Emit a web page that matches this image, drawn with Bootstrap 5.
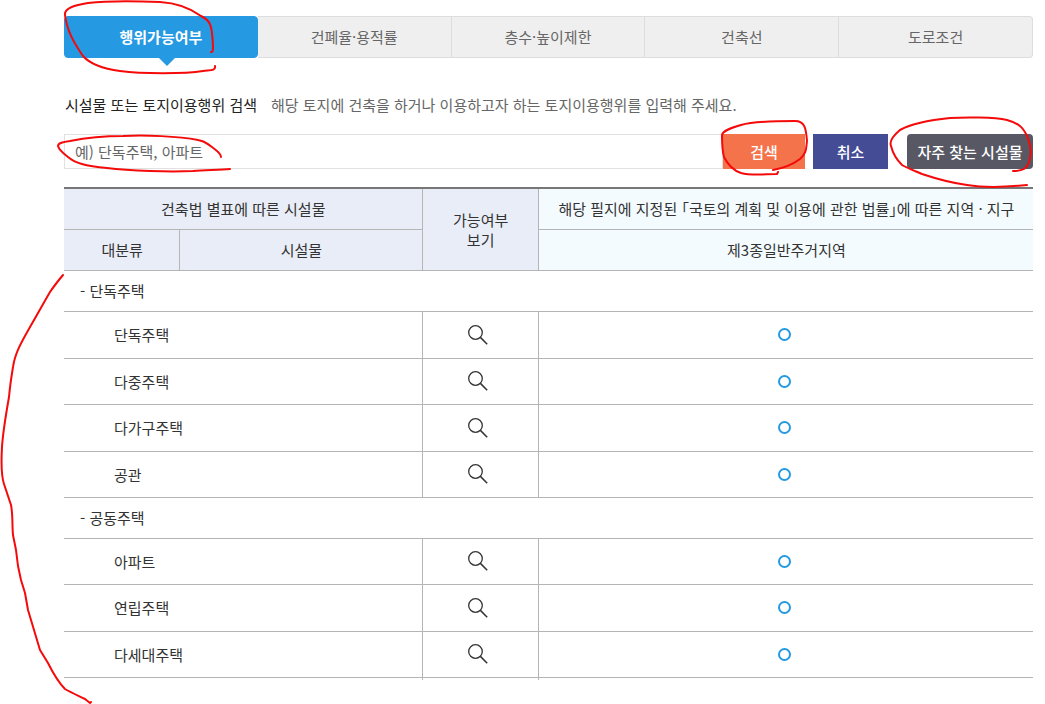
<!DOCTYPE html>
<html lang="ko">
<head>
<meta charset="utf-8">
<meta name="viewport" content="width=device-width, initial-scale=1">
<title>행위가능여부</title>
<link href="https://cdn.jsdelivr.net/npm/bootstrap@5.3.0/dist/css/bootstrap.min.css" rel="stylesheet">
<style>
  body { font-family: "Noto Sans CJK KR", sans-serif; font-size: 15px; line-height: 20px; color: #333; background: #fff; }
  .page-body { padding: 16px 12px 24px 64px; }

  .tab-bar .nav-link { height: 42px; line-height: 40px; padding: 0; color: #666; background: #efefef; border: 1px solid #ddd; border-left-width: 0; border-radius: 0; }
  .tab-bar .nav-item:last-child .nav-link { border-radius: 0 4px 4px 0; }
  .tab-bar .nav-link.active { color: #fff; background: #2599e1; border-color: #2599e1; border-left-width: 1px; border-radius: 4px; font-weight: 700; }
  .tab-arrow { top: 100%; left: 50%; margin-left: -2px; border: 8px solid transparent; border-top-color: #2599e1; border-bottom: 0; }

  .search-area { padding-top: 37px; padding-bottom: 18px; }
  .search-intro { gap: 14px; margin-bottom: 19px; padding-left: 1px; }
  .search-title { color: #222; }
  .search-help { color: #666; }
  .search-box { height: 35px; padding: 0 10px; font-size: 15px; color: #333; border: 1px solid #e1e1e1; border-radius: 0; }
  .search-box::placeholder { color: #666; opacity: 1; }
  .search-row .btn { height: 35px; padding: 0; font-size: 15px; line-height: 20px; font-weight: 500; color: #fff; border: 0; border-radius: 0; }
  .search-row .btn-find { width: 82px; background: #f4734b; }
  .search-row .btn-cancel { width: 75px; margin-right: 19px; background: #434c94; }
  .search-row .btn-often { width: 126px; background: #585864; border-radius: 4px; }

  .use-table { table-layout: fixed; border-collapse: separate; border-spacing: 0; border-top: 2px solid #777; }
  .use-table th, .use-table td { height: 46px; padding: 0; border-bottom: 1px solid #b5b5b5; font-weight: 400; vertical-align: middle; }
  .use-table tbody tr:nth-child(even) > td { height: 47px; }
  .use-table thead th { height: 41px; padding-left: 1px; text-align: center; background: #e9edf7; }
  .use-table thead th.zone-head { background: #f3fbff; font-feature-settings: "halt"; }
  .use-table tbody .group-name { height: 41px; padding-left: 16px; }
  .use-table .item-name { padding-left: 50px; }
  .use-table .line-end { border-right: 1px solid #b5b5b5; }
  .use-table tbody tr.next-row > td { height: 2px; border-bottom: 0; }
  .use-table .view-cell { padding-right: 4px; padding-bottom: 1px; }
  .use-table .mark-cell { padding-right: 3px; padding-bottom: 1px; }
  .view-btn { width: 20px; height: 20px; color: #333; }
  .allow-mark { width: 13px; height: 13px; border: 2px solid #2599e1; border-radius: 50%; }

  .pen-mark { overflow: visible; pointer-events: none; z-index: 5; fill: none; stroke: #f50a0a; stroke-width: 2; stroke-linecap: round; stroke-linejoin: round; }
  .pen-tab { left: 0; top: -16px; }
  .pen-input { left: -7px; top: 0; }
  .pen-find { left: -2px; top: -14px; }
  .pen-often { right: 0; top: -18px; }
  .pen-table { left: -64px; top: 86px; }
</style>
</head>
<body>
<svg width="0" height="0" class="position-absolute" aria-hidden="true">
  <symbol id="lens" viewBox="0 0 20 20">
    <circle cx="7.5" cy="7.5" r="6.8" fill="none" stroke="currentColor" stroke-width="1.3"/>
    <path d="M12.4 12.4 19.2 19.2" fill="none" stroke="currentColor" stroke-width="1.5"/>
  </symbol>
</svg>

<main class="page-body">
  <ul class="nav nav-fill tab-bar flex-nowrap text-center">
    <li class="nav-item w-100 position-relative">
      <a class="nav-link active" href="#" aria-current="page">행위가능여부</a>
      <span class="tab-arrow position-absolute"></span>
      <svg class="pen-mark pen-tab position-absolute" width="153" height="75" viewBox="64 0 153 75" aria-hidden="true"><path d="M211 52C214 53 213 44 212 33C211 24 209 20 201 16C190 8 178 3 160 2C136 1 105 1 88 3C75 5 64 8 65 15C67 31 74 43 83 56C91 65 105 69 120 71C142 74 185 74 203 71C210 70 216 71 215 66"/></svg>
    </li>
    <li class="nav-item w-100"><a class="nav-link" href="#">건폐율·용적률</a></li>
    <li class="nav-item w-100"><a class="nav-link" href="#">층수·높이제한</a></li>
    <li class="nav-item w-100"><a class="nav-link" href="#">건축선</a></li>
    <li class="nav-item w-100"><a class="nav-link" href="#">도로조건</a></li>
  </ul>

  <section class="search-area">
    <div class="search-intro d-flex">
      <label class="search-title" for="facility">시설물 또는 토지이용행위 검색</label>
      <span class="search-help">해당 토지에 건축을 하거나 이용하고자 하는 토지이용행위를 입력해 주세요.</span>
    </div>
    <form class="search-row d-flex">
      <div class="flex-grow-1 position-relative">
        <input class="form-control search-box" type="text" id="facility" placeholder="예) 단독주택, 아파트">
        <svg class="pen-mark pen-input position-absolute" width="175" height="38" viewBox="57 134 175 38" aria-hidden="true"><path d="M221 157C221 153 217 151 212 147C207 144 206 141 198 140C178 136 145 135 123 136C100 136 85 138 70 141C63 142 58 143 58 146C59 150 64 154 68 157C75 163 85 166 107 168C130 171 170 172 193 171C207 170 220 170 230 169"/></svg>
      </div>
      <div class="position-relative me-2">
        <button class="btn btn-find" type="button">검색</button>
        <svg class="pen-mark pen-find position-absolute" width="86" height="57" viewBox="721 120 86 57" aria-hidden="true"><path d="M773 170C784 168 792 165 800 159C807 153 806 148 807 141C806 131 806 121 795 121C779 121 752 122 741 125C732 128 723 130 722 135C722 142 722 150 724 157C727 163 732 170 741 173C752 176 765 174 777 174L778 172"/></svg>
      </div>
      <button class="btn btn-cancel" type="button">취소</button>
      <div class="position-relative">
        <button class="btn btn-often" type="button">자주 찾는 시설물</button>
        <svg class="pen-mark pen-often position-absolute" width="143" height="72" viewBox="890 116 143 72" aria-hidden="true"><path d="M1013 171C1024 171 1027 168 1029 162C1032 153 1031 145 1027 136C1023 127 1018 123 1007 120C994 117 965 117 950 118C930 120 911 124 900 130C894 135 889 141 891 146C893 154 898 161 902 165C907 168 915 171 922 174C937 179 952 183 967 185C985 188 1008 187 1027 185"/></svg>
      </div>
    </form>
  </section>

  <div class="position-relative">
    <table class="use-table w-100">
      <colgroup><col style="width:12%"><col style="width:25%"><col style="width:12%"><col style="width:51%"></colgroup>
      <thead>
        <tr>
          <th class="line-end" colspan="2" scope="colgroup">건축법 별표에 따른 시설물</th>
          <th class="line-end" rowspan="2" scope="col">가능여부<br>보기</th>
          <th class="zone-head" scope="col">해당 필지에 지정된 「국토의 계획 및 이용에 관한 법률」에 따른 지역 · 지구</th>
        </tr>
        <tr>
          <th class="line-end" scope="col">대분류</th>
          <th class="line-end" scope="col">시설물</th>
          <th class="zone-head" scope="col">제3종일반주거지역</th>
        </tr>
      </thead>
      <tbody>
        <tr><th class="group-name" colspan="4" scope="rowgroup">- 단독주택</th></tr>
        <tr><td class="item-name line-end" colspan="2">단독주택</td><td class="view-cell line-end"><button type="button" class="btn view-btn p-0 border-0 d-flex mx-auto" aria-label="보기"><svg width="20" height="20"><use href="#lens"/></svg></button></td><td class="mark-cell"><span class="allow-mark d-block mx-auto" role="img" aria-label="가능"></span></td></tr>
        <tr><td class="item-name line-end" colspan="2">다중주택</td><td class="view-cell line-end"><button type="button" class="btn view-btn p-0 border-0 d-flex mx-auto" aria-label="보기"><svg width="20" height="20"><use href="#lens"/></svg></button></td><td class="mark-cell"><span class="allow-mark d-block mx-auto" role="img" aria-label="가능"></span></td></tr>
        <tr><td class="item-name line-end" colspan="2">다가구주택</td><td class="view-cell line-end"><button type="button" class="btn view-btn p-0 border-0 d-flex mx-auto" aria-label="보기"><svg width="20" height="20"><use href="#lens"/></svg></button></td><td class="mark-cell"><span class="allow-mark d-block mx-auto" role="img" aria-label="가능"></span></td></tr>
        <tr><td class="item-name line-end" colspan="2">공관</td><td class="view-cell line-end"><button type="button" class="btn view-btn p-0 border-0 d-flex mx-auto" aria-label="보기"><svg width="20" height="20"><use href="#lens"/></svg></button></td><td class="mark-cell"><span class="allow-mark d-block mx-auto" role="img" aria-label="가능"></span></td></tr>
        <tr><th class="group-name" colspan="4" scope="rowgroup">- 공동주택</th></tr>
        <tr><td class="item-name line-end" colspan="2">아파트</td><td class="view-cell line-end"><button type="button" class="btn view-btn p-0 border-0 d-flex mx-auto" aria-label="보기"><svg width="20" height="20"><use href="#lens"/></svg></button></td><td class="mark-cell"><span class="allow-mark d-block mx-auto" role="img" aria-label="가능"></span></td></tr>
        <tr><td class="item-name line-end" colspan="2">연립주택</td><td class="view-cell line-end"><button type="button" class="btn view-btn p-0 border-0 d-flex mx-auto" aria-label="보기"><svg width="20" height="20"><use href="#lens"/></svg></button></td><td class="mark-cell"><span class="allow-mark d-block mx-auto" role="img" aria-label="가능"></span></td></tr>
        <tr><td class="item-name line-end" colspan="2">다세대주택</td><td class="view-cell line-end"><button type="button" class="btn view-btn p-0 border-0 d-flex mx-auto" aria-label="보기"><svg width="20" height="20"><use href="#lens"/></svg></button></td><td class="mark-cell"><span class="allow-mark d-block mx-auto" role="img" aria-label="가능"></span></td></tr>
        <tr class="next-row"><td class="line-end" colspan="2"></td><td class="line-end"></td><td></td></tr>
      </tbody>
    </table>
    <svg class="pen-mark pen-table position-absolute" width="94" height="431" viewBox="0 273 94 431" aria-hidden="true"><path d="M63 275C58 281 54 286 50 292C43 304 37 315 30 327C22 341 15 353 13 367C11 379 10 386 9 397C6 414 3 431 2 447C1 465 1 475 4 484L11 505C13 515 12 525 13 535L16 550L18 566L21 580L25 593L28 610L40 650L48 663C54 675 58 682 65 689C72 693 79 696 85 699L90 703L91 702"/></svg>
  </div>
</main>
<script src="https://cdn.jsdelivr.net/npm/bootstrap@5.3.0/dist/js/bootstrap.bundle.min.js"></script>
</body>
</html>
